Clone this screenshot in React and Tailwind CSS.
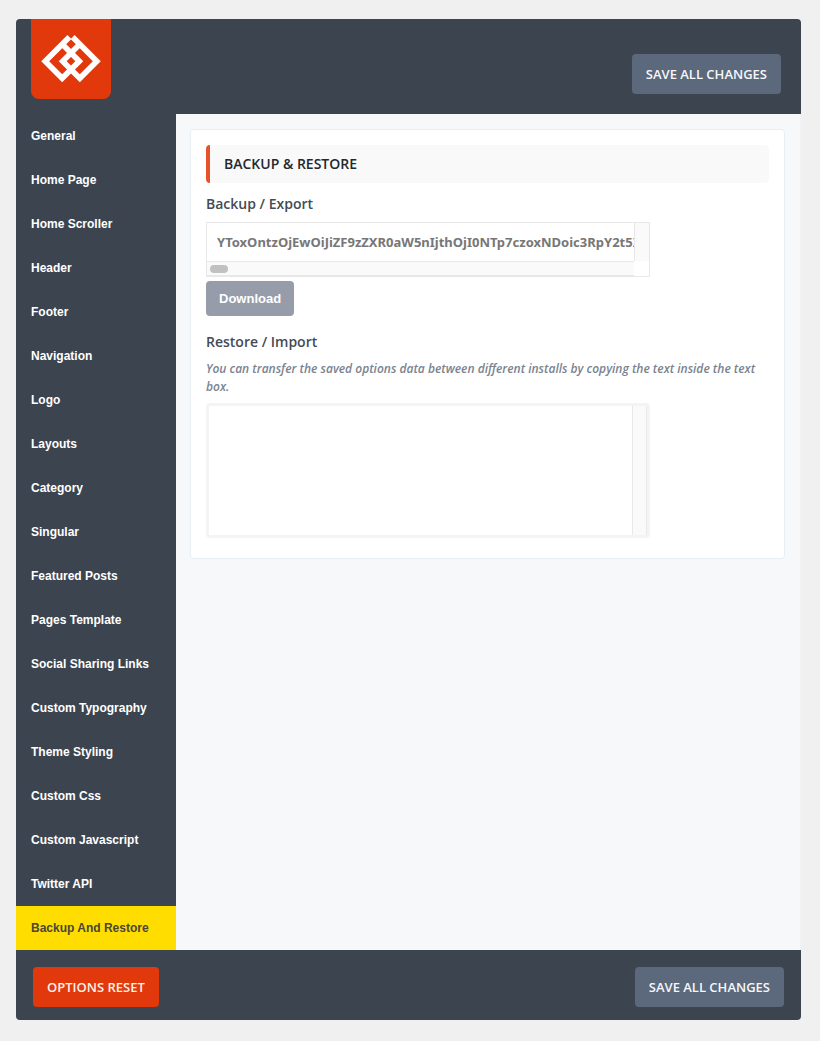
const sections = [
  "General", "Home Page", "Home Scroller", "Header", "Footer", "Navigation",
  "Logo", "Layouts", "Category", "Singular", "Featured Posts", "Pages Template",
  "Social Sharing Links", "Custom Typography", "Theme Styling", "Custom Css",
  "Custom Javascript", "Twitter API", "Backup And Restore",
];

const exportData = "YToxOntzOjEwOiJiZF9zZXR0aW5nIjthOjI0NTp7czoxNDoic3RpY2t5X3NpZGViYXIiO3M6Mjoib24i";

function SaveButton() {
  return (
    <button type="submit" className="h-10 rounded bg-[#5c687b] px-3.5 pt-0.5 text-[13px] font-semibold text-[#f5f7fa]">
      SAVE ALL CHANGES
    </button>
  );
}

function Logo() {
  return (
    <a href="#general" aria-label="Home" className="block size-20 rounded-b-lg bg-[#e2390c]">
      <svg viewBox="0 0 80 80" className="size-20" fill="none" stroke="#fff" strokeWidth="5.6">
        <path d="M38.4 18 L14.2 42.3 L31.2 59.3 L48.3 42.3 L31.3 25.3" />
        <path d="M41.6 18 L65.8 42.3 L48.8 59.3 L31.7 42.3 L48.7 25.3" />
      </svg>
    </a>
  );
}

export default function App() {
  return (
    <div className="min-h-screen bg-[#f0f0f0] pt-[19px] pr-[19px] pb-5 pl-4 font-['Open_Sans',sans-serif]">
      <form className="overflow-hidden rounded bg-[#3c4450]" onSubmit={(e) => e.preventDefault()}>
        <header className="flex h-[95px] items-start justify-between pr-5 pl-[15px]">
          <Logo />
          <div className="pt-[35px]"><SaveButton /></div>
        </header>
        <div className="flex">
          <nav className="w-40 shrink-0 font-['Liberation_Sans',sans-serif] text-xs font-bold text-white">
            {sections.map((name) => (
              <a
                key={name}
                href={"#" + name.toLowerCase().replaceAll(" ", "-")}
                className={name === "Backup And Restore" ? "flex h-11 items-center bg-[#ffdd00] px-[15px] text-[#4b4635]" : "flex h-11 items-center px-[15px]"}
              >
                {name}
              </a>
            ))}
          </nav>
          <main className="min-w-0 flex-1 border-r border-[#f0f2f5] bg-[#f7f8fa] py-[15px] pr-[15px] pl-3.5">
            <section className="rounded border border-[#e8eff4] bg-white px-[15px] pt-[15px] pb-5">
              <h2 className="rounded border-l-4 border-[#e8522b] bg-[#f9f9f9] py-2 pl-3.5 text-sm leading-[22px] font-semibold text-[#23282d]">
                BACKUP &amp; RESTORE
              </h2>
              <label htmlFor="export" className="mt-2.5 block text-sm leading-[22px] font-semibold text-[#444b54]">Backup / Export</label>
              <div className="mt-[7px] max-w-[444px] border border-[#e8e8e8]">
                <div className="flex h-[38px]">
                  <input
                    id="export"
                    readOnly
                    defaultValue={exportData}
                    className="min-w-0 flex-1 bg-white pt-0.5 pl-2.5 font-['Noto_Sans',sans-serif] text-[13px] font-bold text-[#777] outline-none"
                  />
                  <div className="w-[15px] border-l border-[#e8e8e8] bg-[#fafafa]" />
                </div>
                <div className="flex h-[15px]">
                  <div className="flex flex-1 items-center border-t border-b border-[#e8e8e8] bg-[#fafafa] pl-[3px]">
                    <div className="h-2 w-[18px] rounded-full bg-[#c1c1c1]" />
                  </div>
                  <div className="w-[15px] bg-white" />
                </div>
              </div>
              <button type="button" className="mt-1 block h-[35px] rounded bg-[#969caa] px-[13px] font-['Liberation_Sans',sans-serif] text-[13px] font-bold text-white">
                Download
              </button>
              <label htmlFor="import" className="mt-[15px] block text-sm leading-[22px] font-semibold text-[#444b54]">Restore / Import</label>
              <p className="mt-[7px] text-xs leading-[18px] font-semibold text-[#7a8390] italic">
                You can transfer the saved options data between different installs by copying the text inside the text box.
              </p>
              <div className="mt-[7px] flex h-[135px] max-w-[444px] rounded border-3 border-[#f4f4f4] bg-white">
                <textarea id="import" className="min-w-0 flex-1 resize-none p-2 text-xs outline-none" />
                <div className="w-[15px] border-x border-[#e8e8e8] bg-[#fafafa]" />
              </div>
            </section>
          </main>
        </div>
        <footer className="flex h-[70px] items-center justify-between px-[17px] pt-1">
          <button type="reset" className="h-10 rounded bg-[#e2390c] px-3.5 pt-0.5 text-[13px] font-semibold text-[#fdf1e6]">
            OPTIONS RESET
          </button>
          <SaveButton />
        </footer>
      </form>
    </div>
  );
}
